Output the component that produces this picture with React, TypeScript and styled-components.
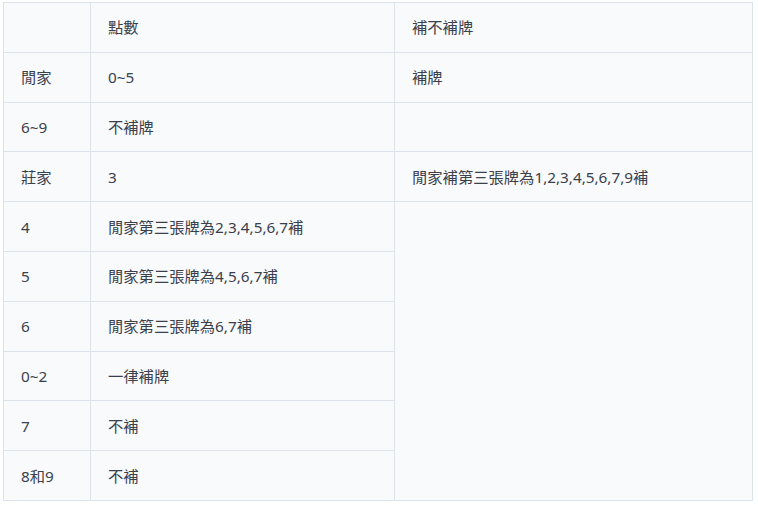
import React from "react";
import styled, { createGlobalStyle } from "styled-components";

const Global = createGlobalStyle`
  html, body { margin: 0; padding: 0; background: #ffffff; }
  body { font-family: "Noto Sans", "Noto Sans CJK TC", sans-serif; }
`;

const Page = styled.div`
  padding: 2px 0 0 3px;
`;

const Table = styled.table`
  border-collapse: collapse;
  width: 750px;
  table-layout: fixed;
  background: #f8fafc;
  color: #3a404c;
  font-size: 15.3px;
  border: 1px solid #dde3ea;
`;

const Row = styled.tr`
  height: 49.8px;
`;

const Cell = styled.td`
  border: 1px solid #dde3ea;
  padding: 0 17px;
  vertical-align: middle;
  line-height: 20px;
  text-align: left;
  font-weight: 400;
`;

const rows: [string, string][] = [
  ["4", "閒家第三張牌為2,3,4,5,6,7補"],
  ["5", "閒家第三張牌為4,5,6,7補"],
  ["6", "閒家第三張牌為6,7補"],
  ["0~2", "一律補牌"],
  ["7", "不補"],
  ["8和9", "不補"],
];

export default function App() {
  return (
    <>
      <Global />
      <Page>
        <Table>
          <colgroup>
            <col style={{ width: 87 }} />
            <col style={{ width: 304 }} />
            <col style={{ width: 358 }} />
          </colgroup>
          <tbody>
            <Row>
              <Cell></Cell>
              <Cell>點數</Cell>
              <Cell>補不補牌</Cell>
            </Row>
            <Row>
              <Cell>閒家</Cell>
              <Cell>0~5</Cell>
              <Cell>補牌</Cell>
            </Row>
            <Row>
              <Cell>6~9</Cell>
              <Cell>不補牌</Cell>
              <Cell></Cell>
            </Row>
            <Row>
              <Cell>莊家</Cell>
              <Cell>3</Cell>
              <Cell>閒家補第三張牌為1,2,3,4,5,6,7,9補</Cell>
            </Row>
            {rows.map(([a, b], i) => (
              <Row key={a}>
                <Cell>{a}</Cell>
                <Cell>{b}</Cell>
                {i === 0 && <Cell rowSpan={6}></Cell>}
              </Row>
            ))}
          </tbody>
        </Table>
      </Page>
    </>
  );
}
